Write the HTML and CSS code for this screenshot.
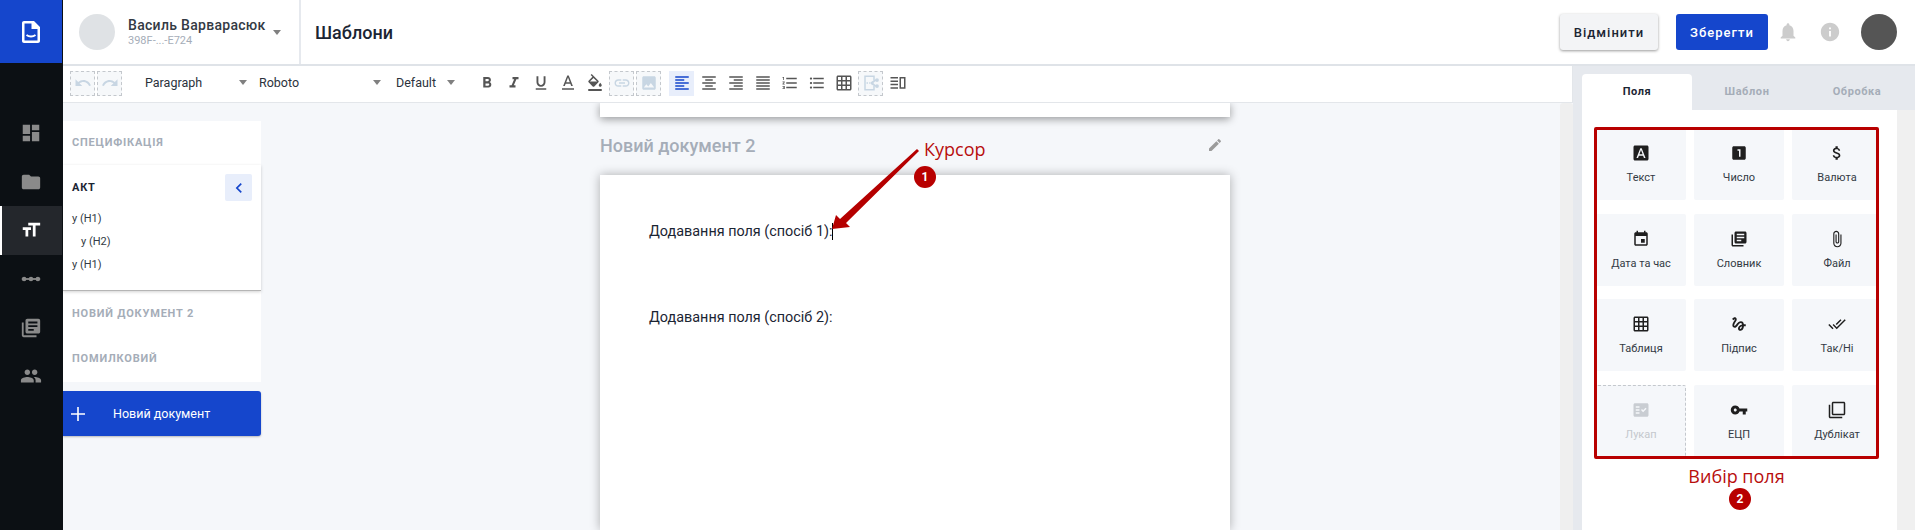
FILE: index.html
```html
<!doctype html>
<html>
<head>
    <meta charset="utf-8">
    <link rel="stylesheet" href="styles.css">
</head>
<body>
    <nav class="rail">
        <div class="logo">
            <svg width="18" height="22" viewBox="0 0 18 22"><path fill="#fff" d="M2 0h10l6 6v14c0 1.100-.9 2-2 2H2c-1.100 0-2-.9-2-2V2C0 .9.900 0 2 0zm.500 2.500v17h13V8h-6V2.500h-7z"/><path fill="none" stroke="#fff" stroke-width="1.800" d="M4.500 14c2.500 2 6.500 2 9 0"/></svg>
        </div>
        <ul class="rail-menu">
            <li><svg viewBox="0 0 24 24"><path d="M3 13h8V3H3v10zm0 8h8v-6H3v6zm10 0h8V11h-8v10zm0-18v6h8V3h-8z"/></svg></li>
            <li><svg viewBox="0 0 24 24"><path d="M10 4H4c-1.100 0-1.990.9-1.990 2L2 18c0 1.100.9 2 2 2h16c1.100 0 2-.9 2-2V8c0-1.100-.9-2-2-2h-8l-2-2z"/></svg></li>
            <li class="current"><svg viewBox="0 0 24 24"><path d="M9 4v3h5v12h3V7h5V4H9zm-6 8h3v7h3v-7h3V9H3v3z"/></svg></li>
            <li><svg viewBox="0 0 24 24"><path d="M2 11h20v2H2z"/><circle cx="4.500" cy="12" r="2.500"/><circle cx="12" cy="12" r="2.500"/><circle cx="19.500" cy="12" r="2.500"/></svg></li>
            <li><svg viewBox="0 0 24 24"><path d="M4 6H2v14c0 1.100.9 2 2 2h14v-2H4V6zm16-4H8c-1.100 0-2 .9-2 2v12c0 1.100.9 2 2 2h12c1.100 0 2-.9 2-2V4c0-1.100-.9-2-2-2zm-1 9H9V9h10v2zm-4 4H9v-2h6v2zm4-8H9V5h10v2z"/></svg></li>
            <li><svg viewBox="0 0 24 24"><path d="M16 11c1.660 0 2.990-1.340 2.990-3S17.660 5 16 5c-1.660 0-3 1.340-3 3s1.340 3 3 3zm-8 0c1.660 0 2.990-1.340 2.990-3S9.660 5 8 5C6.340 5 5 6.340 5 8s1.340 3 3 3zm0 2c-2.330 0-7 1.170-7 3.500V19h14v-2.500c0-2.330-4.670-3.500-7-3.500zm8 0c-.29 0-.62.02-.97.05 1.160.84 1.970 1.970 1.970 3.450V19h6v-2.500c0-2.330-4.670-3.500-7-3.500z"/></svg></li>
        </ul>
    </nav>

    <div class="app">
        <header class="top">
            <div class="user">
                <div class="user-pic"></div>
                <div class="user-info">
                    <div class="user-name">Василь Варварасюк</div>
                    <div class="user-id">398F-...-E724</div>
                </div>
                <span class="caret"></span>
            </div>
            <h1 class="title">Шаблони</h1>
            <button class="btn btn-light">Відмінити</button>
            <button class="btn btn-blue">Зберегти</button>
            <svg class="top-icon bell" viewBox="0 0 24 24"><path d="M12 22c1.100 0 2-.9 2-2h-4c0 1.100.89 2 2 2zm6-6v-5c0-3.070-1.640-5.640-4.500-6.320V4c0-.83-.67-1.500-1.500-1.500s-1.500.67-1.500 1.500v.68C7.630 5.360 6 7.920 6 11v5l-2 2v1h16v-1l-2-2z"/></svg>
            <svg class="top-icon info" viewBox="0 0 24 24"><path d="M12 2C6.480 2 2 6.480 2 12s4.480 10 10 10 10-4.480 10-10S17.520 2 12 2zm1 15h-2v-6h2v6zm0-8h-2V7h2v2z"/></svg>
            <div class="me"></div>
        </header>

        <div class="work">
            <div class="editor">
                <div class="toolbar">
                    <span class="tool off first"><svg viewBox="0 0 24 24"><path d="M12.500 8c-2.650 0-5.050.99-6.900 2.600L2 7v9h9l-3.620-3.620c1.390-1.160 3.160-1.880 5.120-1.880 3.540 0 6.550 2.310 7.600 5.500l2.370-.78C21.080 11.030 17.150 8 12.500 8z"/></svg></span>
                    <span class="tool off"><svg viewBox="0 0 24 24"><path d="M18.400 10.600C16.550 8.990 14.150 8 11.500 8c-4.650 0-8.580 3.030-9.960 7.220L3.900 16c1.050-3.190 4.050-5.500 7.600-5.500 1.950 0 3.730.72 5.120 1.880L13 16h9V7l-3.600 3.600z"/></svg></span>
                    <span class="select sel-block">Paragraph<i class="caret"></i></span>
                    <span class="select sel-font">Roboto<i class="caret"></i></span>
                    <span class="select sel-size">Default<i class="caret"></i></span>
                    <span class="tool"><svg viewBox="0 0 24 24"><path d="M15.600 10.790c.97-.67 1.650-1.770 1.650-2.790 0-2.260-1.750-4-4-4H7v14h7.040c2.090 0 3.710-1.700 3.710-3.790 0-1.520-.86-2.820-2.150-3.420zM10 6.500h3c.83 0 1.500.67 1.500 1.500s-.67 1.500-1.500 1.500h-3v-3zm3.500 9H10v-3h3.500c.83 0 1.500.67 1.500 1.500s-.67 1.500-1.500 1.500z"/></svg></span>
                    <span class="tool"><svg viewBox="0 0 24 24"><path d="M10 4v3h2.210l-3.420 8H6v3h8v-3h-2.210l3.420-8H18V4z"/></svg></span>
                    <span class="tool"><svg viewBox="0 0 24 24"><path d="M12 17c3.310 0 6-2.690 6-6V3h-2.500v8c0 1.930-1.570 3.500-3.500 3.500S8.500 12.930 8.500 11V3H6v8c0 3.310 2.690 6 6 6zm-7 2v2h14v-2H5z"/></svg></span>
                    <span class="tool"><svg viewBox="0 0 24 24"><path d="M11 2L5.500 16h2.250l1.120-3h6.250l1.120 3h2.250L13 2h-2zm-1.380 9L12 4.670 14.380 11H9.620zM4 19h16v2H4z"/></svg></span>
                    <span class="tool"><svg viewBox="0 0 24 24"><path d="M16.560 8.940L7.620 0 6.210 1.410l2.380 2.380-5.150 5.150c-.59.59-.59 1.540 0 2.120l5.500 5.500c.29.29.68.44 1.060.44s.77-.15 1.060-.44l5.500-5.500c.59-.58.59-1.530 0-2.120zM5.210 10L10 5.210 14.790 10H5.210zM19 11.500s-2 2.170-2 3.500c0 1.100.9 2 2 2s2-.9 2-2c0-1.330-2-3.500-2-3.500zM3 20h18v2.500H3z"/></svg></span>
                    <span class="tool off"><svg viewBox="0 0 24 24"><path d="M3.900 12c0-1.710 1.390-3.100 3.100-3.100h4V7H7c-2.760 0-5 2.240-5 5s2.240 5 5 5h4v-1.900H7c-1.710 0-3.100-1.390-3.100-3.100zM8 13h8v-2H8v2zm9-6h-4v1.900h4c1.710 0 3.100 1.390 3.100 3.100s-1.390 3.100-3.100 3.100h-4V17h4c2.760 0 5-2.240 5-5s-2.240-5-5-5z"/></svg></span>
                    <span class="tool off"><svg viewBox="0 0 24 24"><path d="M21 19V5c0-1.100-.9-2-2-2H5c-1.100 0-2 .9-2 2v14c0 1.100.9 2 2 2h14c1.100 0 2-.9 2-2zM8.500 13.500l2.500 3.010L14.500 12l4.500 6H5l3.500-4.500z"/></svg></span>
                    <span class="tool active sep"><svg viewBox="0 0 24 24"><path d="M15 15H3v2h12v-2zm0-8H3v2h12V7zM3 13h18v-2H3v2zm0 8h18v-2H3v2zM3 3v2h18V3H3z"/></svg></span>
                    <span class="tool"><svg viewBox="0 0 24 24"><path d="M7 15v2h10v-2H7zm-4 6h18v-2H3v2zm0-8h18v-2H3v2zm4-6v2h10V7H7zM3 3v2h18V3H3z"/></svg></span>
                    <span class="tool"><svg viewBox="0 0 24 24"><path d="M3 21h18v-2H3v2zm6-4h12v-2H9v2zm-6-4h18v-2H3v2zm6-4h12V7H9v2zM3 3v2h18V3H3z"/></svg></span>
                    <span class="tool"><svg viewBox="0 0 24 24"><path d="M3 21h18v-2H3v2zm0-4h18v-2H3v2zm0-4h18v-2H3v2zm0-4h18V7H3v2zm0-6v2h18V3H3z"/></svg></span>
                    <span class="tool"><svg viewBox="0 0 24 24"><path d="M2 17h2v.5H3v1h1v.5H2v1h3v-4H2v1zm1-9h1V4H2v1h1v3zm-1 3h1.800L2 13.100v.9h3v-1H3.200L5 10.900V10H2v1zm5-6v2h14V5H7zm0 14h14v-2H7v2zm0-6h14v-2H7v2z"/></svg></span>
                    <span class="tool"><svg viewBox="0 0 24 24"><path d="M4 10.500c-.83 0-1.500.67-1.500 1.500s.67 1.500 1.500 1.500 1.500-.67 1.500-1.500-.67-1.500-1.500-1.500zm0-6c-.83 0-1.500.67-1.500 1.500S3.170 7.500 4 7.500 5.500 6.830 5.500 6 4.830 4.500 4 4.500zm0 12c-.83 0-1.500.68-1.500 1.500s.68 1.500 1.500 1.500 1.500-.68 1.500-1.500-.67-1.500-1.500-1.500zM7 19h14v-2H7v2zm0-6h14v-2H7v2zm0-8v2h14V5H7z"/></svg></span>
                    <span class="tool"><svg viewBox="0 0 24 24"><path d="M20 2H4c-1.100 0-2 .9-2 2v16c0 1.100.9 2 2 2h16c1.100 0 2-.9 2-2V4c0-1.100-.9-2-2-2zM8 20H4v-4h4v4zm0-6H4v-4h4v4zm0-6H4V4h4v4zm6 12h-4v-4h4v4zm0-6h-4v-4h4v4zm0-6h-4V4h4v4zm6 12h-4v-4h4v4zm0-6h-4v-4h4v4zm0-6h-4V4h4v4z"/></svg></span>
                    <span class="tool off"><svg viewBox="0 0 24 24"><path d="M3 2h14v6.500h-2V4H5v16h10v-4.500h2V22H3z"/><path d="M6 11h2v2H6zm3.500 0h2v2h-2z"/><circle cx="20" cy="8" r="2.500"/><circle cx="20" cy="16" r="2.500"/><path d="M12 10.500l6-3.500 1 1.500-4 3.500 4 3.500-1 1.500-6-3.500z"/></svg></span>
                    <span class="tool"><svg viewBox="0 0 24 24"><path d="M2 4h10v2H2zm0 4.500h10v2H2zm0 4.500h10v2H2zm0 4.500h10v2H2zM14 4h8v15.500h-8zm2 2v11.500h4V6z"/></svg></span>
                </div>

                <div class="below">
                    <div class="main">
                        <aside class="spec">
                            <div class="spec-head">
                                <div class="spec-name">СПЕЦИФІКАЦІЯ</div>
                            </div>
                            <div class="spec-card">
                                <div class="card-top">
                                    <b>АКТ</b>
                                    <span class="back"><svg width="20" height="20" viewBox="0 0 24 24"><path d="M15.400 7.400L14 6l-6 6 6 6 1.400-1.400L10.800 12z"/></svg></span>
                                </div>
                                <p class="h1">у (H1)</p>
                                <p class="h2">у (H2)</p>
                                <p class="h1">у (H1)</p>
                            </div>
                            <div class="spec-row">
                                <div class="spec-name">НОВИЙ ДОКУМЕНТ 2</div>
                            </div>
                            <div class="spec-row">
                                <div class="spec-name">ПОМИЛКОВИЙ</div>
                            </div>
                            <button class="add-doc">
                                <svg width="20" height="20" viewBox="0 0 20 20"><path d="M9.200 3h1.600v6.200H17v1.600h-6.200V17H9.200v-6.200H3V9.200h6.200z"/></svg>
                                Новий документ
                            </button>
                        </aside>

                        <section class="docs">
                            <div class="page-end"></div>
                            <div class="doc-title">
                                <span>Новий документ 2</span>
                                <svg width="16" height="16" viewBox="0 0 24 24"><path d="M3 17.250V21h3.750L17.810 9.940l-3.750-3.750L3 17.250zM20.710 7.040c.39-.39.39-1.020 0-1.410l-2.340-2.340c-.39-.39-1.020-.39-1.410 0l-1.830 1.830 3.750 3.750 1.830-1.830z"/></svg>
                            </div>
                            <div class="page">
                                <p>Додавання поля (спосіб 1):<i class="cursor"></i></p>
                                <p>Додавання поля (спосіб 2):</p>
                            </div>
                        </section>
                    </div>
                    <div class="scroll"></div>
                </div>
            </div>

            <aside class="side">
                <div class="tabs">
                    <span class="tab current">Поля</span>
                    <span class="tab">Шаблон</span>
                    <span class="tab">Обробка</span>
                </div>
                <div class="side-body">
                    <div class="side-content">
                        <div class="frame">
                            <div class="fields">
                                <div class="field"><svg viewBox="0 0 24 24"><path d="M9.930 13.500h4.140L12 7.980zM20 2H4c-1.100 0-2 .9-2 2v16c0 1.100.9 2 2 2h16c1.100 0 2-.9 2-2V4c0-1.100-.9-2-2-2zm-4.050 16.500l-1.140-3H9.170l-1.120 3H5.960l5.110-13h1.860l5.110 13h-2.090z"/></svg>Текст</div>
                                <div class="field"><svg viewBox="0 0 24 24"><path d="M19 3H5c-1.100 0-2 .9-2 2v14c0 1.100.9 2 2 2h14c1.100 0 2-.9 2-2V5c0-1.100-.9-2-2-2zm-5 14h-2V9h-2V7h4v10z"/></svg>Число</div>
                                <div class="field"><svg viewBox="0 0 24 24"><path d="M11.800 10.900c-2.270-.59-3-1.200-3-2.150 0-1.090 1.010-1.850 2.700-1.850 1.780 0 2.440.85 2.500 2.100h2.210c-.07-1.720-1.120-3.300-3.210-3.810V3h-3v2.160c-1.940.42-3.500 1.680-3.500 3.610 0 2.310 1.910 3.460 4.700 4.130 2.500.6 3 1.480 3 2.410 0 .69-.49 1.790-2.700 1.790-2.060 0-2.870-.92-2.980-2.100h-2.200c.12 2.190 1.760 3.420 3.680 3.830V21h3v-2.150c1.950-.37 3.500-1.500 3.500-3.550 0-2.840-2.430-3.810-4.700-4.400z"/></svg>Валюта</div>
                                <div class="field"><svg viewBox="0 0 24 24"><path d="M17 12h-5v5h5v-5zM16 1v2H8V1H6v2H5c-1.110 0-1.990.9-1.990 2L3 19c0 1.100.89 2 2 2h14c1.100 0 2-.9 2-2V5c0-1.100-.9-2-2-2h-1V1h-2zm3 18H5V8h14v11z"/></svg>Дата та час</div>
                                <div class="field"><svg viewBox="0 0 24 24"><path d="M4 6H2v14c0 1.100.9 2 2 2h14v-2H4V6zm16-4H8c-1.100 0-2 .9-2 2v12c0 1.100.9 2 2 2h12c1.100 0 2-.9 2-2V4c0-1.100-.9-2-2-2zm-1 9H9V9h10v2zm-4 4H9v-2h6v2zm4-8H9V5h10v2z"/></svg>Словник</div>
                                <div class="field"><svg viewBox="0 0 24 24"><path d="M16.500 6v11.500c0 2.210-1.790 4-4 4s-4-1.790-4-4V5c0-1.380 1.120-2.500 2.500-2.500s2.500 1.120 2.500 2.500v10.500c0 .55-.45 1-1 1s-1-.45-1-1V6H10v9.500c0 1.380 1.120 2.500 2.500 2.500s2.500-1.120 2.500-2.500V5c0-2.210-1.790-4-4-4S7 2.790 7 5v12.500c0 3.040 2.460 5.500 5.500 5.500s5.500-2.460 5.500-5.500V6h-1.500z"/></svg>Файл</div>
                                <div class="field"><svg viewBox="0 0 24 24"><path d="M20 2H4c-1.100 0-2 .9-2 2v16c0 1.100.9 2 2 2h16c1.100 0 2-.9 2-2V4c0-1.100-.9-2-2-2zM8 20H4v-4h4v4zm0-6H4v-4h4v4zm0-6H4V4h4v4zm6 12h-4v-4h4v4zm0-6h-4v-4h4v4zm0-6h-4V4h4v4zm6 12h-4v-4h4v4zm0-6h-4v-4h4v4zm0-6h-4V4h4v4z"/></svg>Таблиця</div>
                                <div class="field"><svg viewBox="0 0 24 24"><path d="M4.590 6.890c.7-.71 1.400-1.350 1.710-1.220.5.2 0 1.030-.3 1.520-.25.42-2.860 3.890-2.860 6.310 0 1.280.48 2.340 1.340 2.980.75.56 1.740.73 2.640.46 1.070-.31 1.950-1.400 3.060-2.770 1.210-1.490 2.830-3.440 4.080-3.440 1.630 0 1.650 1.010 1.760 1.790-3.780.64-5.380 3.670-5.380 5.370 0 1.700 1.440 3.090 3.210 3.090 1.630 0 4.290-1.330 4.690-6.100H21v-2.500h-2.470c-.15-1.650-1.090-4.200-4.030-4.200-2.250 0-4.180 1.910-4.940 2.840-.58.73-2.060 2.480-2.290 2.720-.25.3-.68.84-1.110.84-.45 0-.72-.83-.36-1.920.35-1.090 1.400-2.860 1.850-3.520.78-1.140 1.300-1.920 1.300-3.280C8.950 3.690 7.310 3 6.440 3 5.120 3 3.970 4 3.720 4.250c-.36.36-.66.66-.88.93l1.750 1.710zm9.290 11.660c-.31 0-.74-.26-.74-.72 0-.6.73-2.200 2.870-2.760-.3 2.690-1.430 3.480-2.130 3.480z"/></svg>Підпис</div>
                                <div class="field"><svg viewBox="0 0 24 24"><path d="M18 7l-1.410-1.410-6.340 6.340 1.410 1.410L18 7zm4.240-1.410L11.660 16.170 7.480 12l-1.410 1.410L11.660 19l12-12-1.420-1.410zM.41 13.410L6 19l1.410-1.410L1.830 12 .41 13.410z"/></svg>Так/Ні</div>
                                <div class="field off"><svg viewBox="0 0 24 24"><path d="M20 3H4c-1.100 0-2 .9-2 2v14c0 1.100.9 2 2 2h16c1.100 0 2-.9 2-2V5c0-1.100-.9-2-2-2zM10 17H5v-2h5v2zm0-4H5v-2h5v2zm0-4H5V7h5v2zm4.820 6L12 12.160l1.410-1.410 1.410 1.420L17.990 9l1.420 1.420L14.820 15z"/></svg>Лукап</div>
                                <div class="field"><svg viewBox="0 0 24 24"><path d="M12.650 10C11.830 7.670 9.610 6 7 6c-3.310 0-6 2.690-6 6s2.690 6 6 6c2.610 0 4.830-1.670 5.650-4H17v4h4v-4h2v-4H12.650zM7 14c-1.100 0-2-.9-2-2s.9-2 2-2 2 .9 2 2-.9 2-2 2z"/></svg>ЕЦП</div>
                                <div class="field"><svg viewBox="0 0 24 24"><path d="M3 5H1v16c0 1.100.9 2 2 2h16v-2H3V5zm18-4H7c-1.100 0-2 .9-2 2v14c0 1.100.9 2 2 2h14c1.100 0 2-.9 2-2V3c0-1.100-.9-2-2-2zm0 16H7V3h14v14z"/></svg>Дублікат</div>
                            </div>
                        </div>
                        <div class="note-field">Вибір поля</div>
                        <div class="badge badge-two">2</div>
                    </div>
                    <div class="side-scroll"></div>
                </div>
            </aside>
        </div>
    </div>

    <!-- пометки поверх интерфейса -->
    <svg class="arrow" width="100" height="90" viewBox="0 0 100 90"><polygon points="97,9 99,11 26,83 30,87 12,89 16,75 20,79"/></svg>
    <div class="note-cursor">Курсор</div>
    <div class="badge badge-one">1</div>
</body>
</html>
```

FILE: styles.css
```css
* {
    margin: 0;
    padding: 0;
    box-sizing: border-box;
    list-style: none;
}
html, body {
    width: 100%;
    height: 100%;
    overflow: hidden;
}
body {
    display: flex;
    font-family: Roboto, "Liberation Sans", sans-serif;
    color: #1b2533;
    background-color: #f5f7fa;
}
button {
    font-family: inherit;
    border: none;
}

/* rail */
.rail {
    width: 63px;
    flex: none;
    background-color: #0c1014;
}
.logo {
    width: 62px;
    height: 63px;
    display: flex;
    align-items: center;
    justify-content: center;
    background-color: #1546cc;
}
.rail-menu {
    margin-top: 46px;
}
.rail-menu li {
    height: 48.600px;
    display: flex;
    align-items: center;
    justify-content: center;
    width: 62px;
}
.rail-menu svg {
    width: 22px;
    height: 22px;
    fill: #8a8a8a;
}
.rail-menu li.current {
    background-color: #24272c;
    border-left: 2px solid #fff;
    padding-right: 2px;
}
.rail-menu li.current svg {
    fill: #fff;
}

.app {
    flex: 1;
    min-width: 0;
    display: flex;
    flex-direction: column;
}

/* top bar */
.top {
    height: 66px;
    flex: none;
    display: flex;
    align-items: center;
    background-color: #fff;
    border-bottom: 2px solid #dfe3e8;
    padding-right: 18px;
}
.user {
    width: 238px;
    height: 64px;
    display: flex;
    align-items: center;
    padding-left: 16px;
    border-right: 2px solid #e6e9ee;
}
.user-pic {
    width: 36px;
    height: 36px;
    border-radius: 50%;
    background-color: #dfe2e5;
}
.user-info {
    margin-left: 13px;
}
.user-name {
    font-size: 14px;
    font-weight: 500;
    letter-spacing: .3px;
    line-height: 18px;
    color: #333a44;
}
.user-id {
    font-size: 11px;
    line-height: 14px;
    color: #a5adb8;
}
.caret {
    display: inline-block;
    width: 0;
    height: 0;
    border-left: 4.500px solid transparent;
    border-right: 4.500px solid transparent;
    border-top: 5px solid #808080;
}
.user .caret {
    margin-left: 7px;
}
.title {
    flex: 1;
    margin-left: 14px;
    font-size: 18px;
    font-weight: 500;
}
.btn {
    height: 36px;
    font-size: 13px;
    font-weight: 500;
    letter-spacing: 1px;
    border-radius: 3px;
}
.btn-light {
    width: 98px;
    color: #1b2533;
    background-color: #f3f4f6;
    box-shadow: 0 1px 3px rgba(0, 0, 0, .4);
}
.btn-blue {
    width: 92px;
    margin-left: 18px;
    color: #fff;
    background-color: #1546cc;
}
.top-icon {
    width: 22px;
    height: 22px;
    fill: #cccccc;
}
.bell {
    margin-left: 9px;
}
.info {
    margin-left: 20px;
}
.me {
    width: 36px;
    height: 36px;
    margin-left: 20px;
    border-radius: 50%;
    background-color: #555;
}

/* work area */
.work {
    flex: 1;
    min-height: 0;
    display: flex;
}
.editor {
    width: 1510px;
    flex: none;
    display: flex;
    flex-direction: column;
}
.toolbar {
    height: 37px;
    flex: none;
    display: flex;
    align-items: center;
    padding-bottom: 2px;
    background-color: #fff;
    border-bottom: 1px solid #e3e6ea;
    border-right: 1px solid #e3e6ea;
}
.tool {
    width: 25px;
    height: 25px;
    margin-right: 2px;
    flex: none;
    display: flex;
    align-items: center;
    justify-content: center;
}
.tool svg {
    width: 18px;
    height: 18px;
    fill: #555;
}
.tool.first {
    margin-left: 7px;
}
.tool.off {
    background-color: #f6f8fa;
    border: 1px dashed #c4c8cd;
}
.tool.off svg {
    fill: #c8d6e3;
}
.tool.active {
    background-color: #e8eefb;
}
.tool.active svg {
    fill: #1546cc;
}
.tool.sep {
    margin-left: 6px;
}
.select {
    flex: none;
    display: flex;
    align-items: center;
    justify-content: space-between;
    margin-bottom: 2px;
    font-size: 12.500px;
    color: #2b323c;
}
.sel-block {
    width: 102px;
    margin-left: 21px;
}
.sel-font {
    width: 122px;
    margin-left: 12px;
}
.sel-size {
    width: 59px;
    margin-left: 15px;
    margin-right: 19px;
}
.below {
    flex: 1;
    min-height: 0;
    display: flex;
}
.main {
    flex: 1;
    min-width: 0;
    display: flex;
    overflow: hidden;
}
.scroll {
    width: 13px;
    flex: none;
    background-color: #efefef;
    border-radius: 3px 3px 0 0;
}

/* document list */
.spec {
    width: 198px;
    flex: none;
    margin-top: 18px;
}
.spec-head, .spec-row {
    background-color: #fff;
    padding-left: 9px;
    display: flex;
    align-items: center;
}
.spec-head {
    height: 44px;
    padding-bottom: 2px;
}
.spec-row {
    height: 45px;
}
.spec-row:nth-child(4) {
    height: 46px;
    padding-bottom: 2px;
}
.spec-name {
    font-size: 11px;
    font-weight: 700;
    letter-spacing: .8px;
    color: #a5adb8;
}
.spec-card {
    height: 126px;
    padding: 9px 9px 0;
    background-color: #fff;
    border-bottom: 1px solid #b5b5b5;
    box-shadow: 0 1px 3px rgba(0, 0, 0, .18);
    position: relative;
}
.card-top {
    height: 27px;
    display: flex;
    align-items: center;
    justify-content: space-between;
    margin-bottom: 6px;
    font-size: 11px;
    letter-spacing: .8px;
}
.back {
    width: 27px;
    height: 27px;
    display: flex;
    align-items: center;
    justify-content: center;
    background-color: #e8eefb;
    border-radius: 2px;
}
.back svg {
    fill: #1546cc;
}
.spec-card p {
    font-size: 11px;
    line-height: 23px;
    color: #333a44;
}
.spec-card .h2 {
    padding-left: 9px;
}
.add-doc {
    width: 198px;
    height: 45px;
    margin-top: 9px;
    display: flex;
    align-items: center;
    padding-left: 5px;
    font-size: 12.500px;
    color: #fff;
    background-color: #1546cc;
    border-radius: 0 3px 3px 0;
    box-shadow: 0 1px 2px rgba(0, 0, 0, .25);
    gap: 25px;
}
.add-doc svg {
    fill: #fff;
}

/* pages */
.docs {
    width: 630px;
    flex: none;
    margin-left: 339px;
    display: flex;
    flex-direction: column;
}
.page-end {
    height: 14px;
    flex: none;
    background-color: #fff;
    box-shadow: 0 2px 8px rgba(0, 0, 0, .4);
}
.doc-title {
    height: 58px;
    flex: none;
    display: flex;
    align-items: center;
    justify-content: space-between;
    padding-right: 7px;
    padding-bottom: 2px;
    font-size: 18px;
    font-weight: 500;
    color: #a5adb8;
}
.doc-title svg {
    fill: #9b9b9b;
}
.page {
    flex: 1;
    padding: 46px 49px 0;
    background-color: #fff;
    box-shadow: 0 0 10px rgba(0, 0, 0, .3);
}
.page p {
    font-size: 14.400px;
    line-height: 22px;
    margin-bottom: 64px;
}
.cursor {
    display: inline-block;
    width: 1px;
    height: 17px;
    background-color: #000;
    vertical-align: -4px;
}

/* right panel */
.side {
    flex: 1;
    min-width: 0;
    display: flex;
    flex-direction: column;
    padding: 8px 0 0 9px;
    background-color: #e6e9ee;
}
.tabs {
    height: 36px;
    flex: none;
    display: flex;
}
.tab {
    width: 110px;
    display: flex;
    align-items: center;
    justify-content: center;
    padding-bottom: 2px;
    font-size: 11px;
    font-weight: 700;
    letter-spacing: .6px;
    color: #a5adb8;
    border-radius: 4px 4px 0 0;
}
.tab.current {
    color: #1b2533;
    background-color: #fff;
}
.side-body {
    flex: 1;
    min-height: 0;
    display: flex;
}
.side-content {
    width: 315px;
    flex: none;
    padding: 17px 0 0 12px;
    background-color: #fff;
}
.side-scroll {
    flex: 1;
    background-color: #f0f0f0;
}
.frame {
    width: 285px;
    height: 332px;
    border: 3px solid #b80000;
    border-radius: 2px;
    overflow: hidden;
}
.fields {
    display: grid;
    grid-template-columns: repeat(3, 90px);
    grid-auto-rows: 72px;
    column-gap: 8px;
    row-gap: 13.500px;
    margin: -2px 0 0 -1px;
    width: 286px;
}
.field {
    display: flex;
    flex-direction: column;
    align-items: center;
    padding-top: 16px;
    font-size: 11px;
    line-height: 14px;
    color: #333a44;
    background-color: #f5f7fa;
    border-radius: 2px;
}
.field svg {
    width: 18px;
    height: 18px;
    margin-bottom: 9px;
    fill: #1f1f1f;
}
.field.off {
    color: #c4c8cd;
    border: 1px dashed #c4c8cd;
    padding-top: 15px;
}
.field.off svg {
    fill: #c9cdd2;
}

/* notes */
.note-field, .note-cursor {
    font-family: "Open Sans", sans-serif;
    font-size: 18px;
    line-height: 24px;
    color: #b80d0d;
}
.note-field {
    width: 285px;
    margin-top: 5px;
    text-align: center;
}
.badge {
    width: 22px;
    height: 22px;
    display: flex;
    align-items: center;
    justify-content: center;
    border-radius: 50%;
    font-size: 12px;
    font-weight: 700;
    color: #fff;
    background-color: #b80000;
}
.badge-two {
    margin: 0 0 0 135px;
}
.badge-one {
    position: absolute;
    left: 914px;
    top: 166px;
}
.note-cursor {
    position: absolute;
    left: 924px;
    top: 137px;
}
.arrow {
    position: absolute;
    left: 820px;
    top: 140px;
    fill: #b50000;
}
```
